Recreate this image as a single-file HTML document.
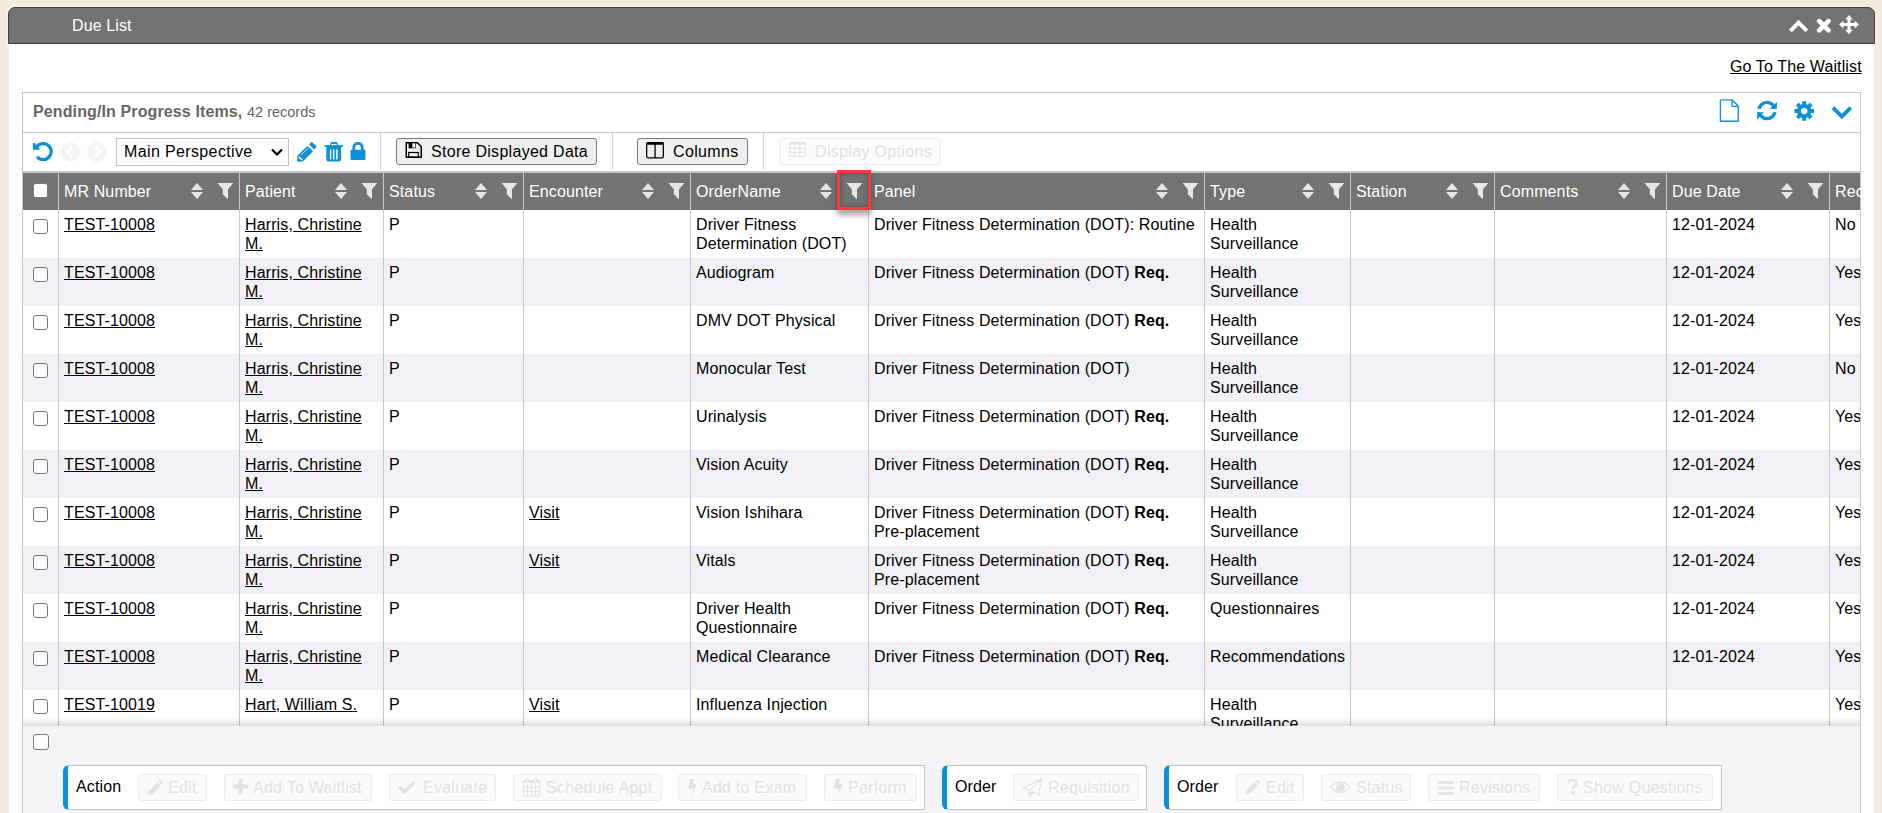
<!DOCTYPE html>
<html><head><meta charset="utf-8"><style>
*{box-sizing:border-box}
html,body{margin:0;padding:0}
body{width:1882px;height:813px;overflow:hidden;background:#f4ecdf;position:relative;font-family:"Liberation Sans",sans-serif;font-size:16px;line-height:19px;color:#000;letter-spacing:0.12px}
.a{position:absolute}
.t{position:absolute;white-space:nowrap}
u{text-decoration:underline}
.hd{position:absolute;top:173px;height:37px;background:#737373}
.vs{position:absolute;width:1px;background:#c8c8c8}
.btn{position:absolute;top:138px;height:27px;border:1px solid #7a7a7a;border-radius:3px;background:#efefef}
.fb{position:absolute;top:774px;height:27px;border:1px solid #ececec;border-radius:3px;background:#fafafa;color:#d9d9d9}
.grp{position:absolute;top:765px;height:45px;border:1px solid #c4c4c4;background:#fff;border-left:5px solid #0a91d8;border-radius:6px 0 0 6px}
</style></head><body>

<div class="a" style="left:8px;top:7px;width:1867px;height:37px;background:#737373;border:1px solid #3f3f3f;border-radius:7px 7px 0 0;box-shadow:0 0 0 1px #fcf6ea"></div>
<div class="t" style="left:72px;top:16px;color:#fff">Due List</div>
<svg class="a" style="left:1788px;top:19px" width="22" height="15" viewBox="0 0 22 15"><path d="M2.4 11.9 L10.6 3.6 L18.8 11.9" stroke="#fff" stroke-width="4" fill="none" stroke-linecap="butt"/></svg>
<svg class="a" style="left:1816px;top:18px" width="16" height="16" viewBox="0 0 16 16"><path d="M3.2 3.1 L12.5 12.3 M12.5 3.1 L3.2 12.3" stroke="#fff" stroke-width="4.6" stroke-linecap="round"/></svg>
<svg class="a" style="left:1839px;top:15px" width="20" height="20" viewBox="0 0 20 20"><path d="M10 0 L13.85 4.4 H11.5 V8.1 H15.6 V5.75 L20 9.6 L15.6 13.45 V11.1 H11.5 V14.8 H13.85 L10 19.2 L6.15 14.8 H8.5 V11.1 H4.4 V13.45 L0 9.6 L4.4 5.75 V8.1 H8.5 V4.4 H6.15 Z" fill="#fff"/></svg>
<div class="a" style="left:8px;top:44px;width:1867px;height:769px;background:#fff;border-left:1px solid #eeeef6;border-right:1px solid #e8e8f2"></div>
<div class="t" style="left:1730px;top:57px"><u>Go To The Waitlist</u></div>
<div class="a" style="left:22px;top:92px;width:1839px;height:730px;border:1px solid #c6c6c6;background:#fff"></div>
<div class="t" style="left:33px;top:102px;color:#666"><b>Pending/In Progress Items,</b> <span style="font-size:14.5px;letter-spacing:0">42 records</span></div>
<div class="a" style="left:23px;top:132px;width:1837px;height:1px;background:#c6c6c6"></div>
<svg class="a" style="left:1719px;top:99px" width="21" height="23" viewBox="0 0 21 23"><path d="M2.4 0.8 H13 L19.25 7 V22.2 H1.4 V1.8 Q1.4 0.8 2.4 0.8 Z M13 0.8 V7.3 H19.25" stroke="#0a91d8" stroke-width="1.35" fill="none" stroke-linejoin="round"/></svg>
<svg class="a" style="left:1757px;top:100px" width="21" height="22" viewBox="0 0 21 22"><circle cx="10" cy="10.5" r="8.1" stroke="#0a91d8" stroke-width="3.4" fill="none"/><rect x="0" y="8.83" width="21" height="3.34" fill="#fff"/><path d="M19.85 1.95 V8.83 H12.78 Z M0.14 19.8 V12.17 H6.83 Z" fill="#0a91d8"/></svg>
<svg class="a" style="left:1794px;top:101px" width="21" height="21" viewBox="0 0 21 21"><path d="M17.30 8.11 L20.03 7.92 L20.03 12.08 L17.30 11.89 L16.57 13.65 L18.64 15.44 L15.69 18.39 L13.90 16.32 L12.14 17.05 L12.33 19.78 L8.17 19.78 L8.36 17.05 L6.60 16.32 L4.81 18.39 L1.86 15.44 L3.93 13.65 L3.20 11.89 L0.47 12.08 L0.47 7.92 L3.20 8.11 L3.93 6.35 L1.86 4.56 L4.81 1.61 L6.60 3.68 L8.36 2.95 L8.17 0.22 L12.33 0.22 L12.14 2.95 L13.90 3.68 L15.69 1.61 L18.64 4.56 L16.57 6.35Z M10.25 6.7 A3.3 3.3 0 1 0 10.26 6.7 Z" fill="#0a91d8" fill-rule="evenodd"/></svg>
<svg class="a" style="left:1831px;top:105px" width="22" height="16" viewBox="0 0 22 16"><path d="M1.95 2.6 L10.875 11.55 L19.8 2.6" stroke="#0a91d8" stroke-width="3.8" fill="none" stroke-linecap="butt"/></svg>
<svg class="a" style="left:32px;top:142px" width="21" height="21" viewBox="0 0 21 21"><path d="M4.65 5.0 A8 8 0 1 1 5.07 14.74" stroke="#0a91d8" stroke-width="3.3" fill="none"/><path d="M0.9 0.9 L2.5 0.9 L8.3 7.8 L0.9 7.8 Z" fill="#0a91d8"/></svg>
<svg class="a" style="left:60px;top:142px" width="21" height="20" viewBox="0 0 21 20"><circle cx="10.25" cy="10" r="10" fill="#f5f5f5"/><path d="M12.2 4.4 L7.6 9.8 L12.2 15.2" stroke="#fff" stroke-width="2.8" fill="none"/></svg>
<svg class="a" style="left:87px;top:142px" width="21" height="20" viewBox="0 0 21 20"><circle cx="10.25" cy="10" r="10" fill="#f5f5f5"/><path d="M8.3 4.4 L12.9 9.8 L8.3 15.2" stroke="#fff" stroke-width="2.8" fill="none"/></svg>
<div class="a" style="left:116px;top:138px;width:173px;height:28px;border:1px solid #c4c4c4;background:#fff"></div>
<div class="t" style="left:124px;top:142px;letter-spacing:0.37px">Main Perspective</div>
<svg class="a" style="left:271px;top:148px" width="12" height="9" viewBox="0 0 12 9"><path d="M1 1.5 L6 6.5 L11 1.5" stroke="#000" stroke-width="2.2" fill="none"/></svg>
<svg class="a" style="left:297px;top:142px" width="21" height="21" viewBox="0 0 21 21"><path d="M12 2.3 L14.6 0.1 Q14.9 -0.1 15.2 0.2 L19.4 4.3 Q19.7 4.6 19.4 4.9 L17.2 7.6 Z" fill="#0a91d8"/><path d="M10.3 4.1 L16.1 9.3 L5.7 19.5 L0.2 19.8 L0.2 14.1 Z" fill="#0a91d8"/><path d="M4.1 12.6 L11.4 6.1" stroke="#e8f4fb" stroke-width="0.8"/><path d="M2.3 15.3 L4.6 17.4" stroke="#fff" stroke-width="1.7" stroke-linecap="round"/></svg>
<svg class="a" style="left:324px;top:142px" width="20" height="20" viewBox="0 0 20 20"><path d="M5.9 3.4 L6.6 1 Q6.9 0 8 0 H12 Q13.1 0 13.4 1 L14.1 3.4 H12.8 L12.4 2 H7.6 L7.2 3.4 Z" fill="#0a91d8"/><rect x="0.7" y="3.1" width="18.2" height="1.9" fill="#0a91d8"/><path d="M2.3 4.9 H17.05 V17.6 Q17.05 19.6 15.05 19.6 H4.3 Q2.3 19.6 2.3 17.6 Z" fill="#0a91d8"/><rect x="5.9" y="7.5" width="1.4" height="9.9" fill="#fff"/><rect x="9" y="7.5" width="1.4" height="9.9" fill="#fff"/><rect x="12.1" y="7.5" width="1.5" height="9.9" fill="#fff"/></svg>
<svg class="a" style="left:350px;top:142px" width="16" height="19" viewBox="0 0 16 19"><path d="M3.8 8 V5.5 A4.2 4.2 0 0 1 12.2 5.5 V8" stroke="#0a91d8" stroke-width="2.8" fill="none"/><rect x="0.5" y="7.8" width="15" height="10.2" rx="1.2" fill="#0a91d8"/></svg>
<div class="a" style="left:380px;top:133px;width:1px;height:37px;background:#d6d6d6"></div>
<div class="btn" style="left:396px;width:201px"></div>
<svg class="a" style="left:405px;top:142px" width="18" height="17" viewBox="0 0 18 17"><path d="M1.25 0.75 H12.5 L16.25 4.5 V15.15 H1.25 Z" stroke="#000" stroke-width="1.5" fill="none" stroke-linejoin="round"/><path d="M3.6 0.75 H10.9 V6.3 H3.6 Z" fill="#000"/><rect x="7.4" y="1.3" width="2.9" height="4.3" fill="#fff"/><rect x="3.7" y="10.5" width="9.6" height="4.7" stroke="#000" stroke-width="1.2" fill="none"/></svg>
<div class="t" style="left:431px;top:142px;letter-spacing:0.29px">Store Displayed Data</div>
<div class="a" style="left:612px;top:133px;width:1px;height:37px;background:#d6d6d6"></div>
<div class="btn" style="left:637px;width:111px"></div>
<svg class="a" style="left:646px;top:142px" width="18" height="17" viewBox="0 0 18 17"><rect x="0.65" y="0.65" width="16.7" height="15.2" rx="1.6" stroke="#000" stroke-width="1.3" fill="none"/><path d="M0 2.2 Q0 0 2.2 0 H15.8 Q18 0 18 2.2 V2.8 H0 Z" fill="#000"/><rect x="8.4" y="1" width="1.3" height="15" fill="#000"/></svg>
<div class="t" style="left:673px;top:142px;letter-spacing:0.35px">Columns</div>
<div class="a" style="left:763px;top:133px;width:1px;height:37px;background:#d6d6d6"></div>
<div class="btn" style="left:779px;width:162px;border-color:#efefef;background:#fcfcfc"></div>
<svg class="a" style="left:789px;top:142px" width="17" height="15" viewBox="0 0 17 15"><rect x="0" y="0" width="17" height="15" rx="1.6" fill="#e5e5e5"/><rect x="1.1" y="2.7" width="4.0" height="2.8" fill="#fbfbfb"/><rect x="1.1" y="6.8" width="4.0" height="3.0" fill="#fbfbfb"/><rect x="1.1" y="10.9" width="4.0" height="3.0" fill="#fbfbfb"/><rect x="6.0" y="2.7" width="4.0" height="2.8" fill="#fbfbfb"/><rect x="6.0" y="6.8" width="4.0" height="3.0" fill="#fbfbfb"/><rect x="6.0" y="10.9" width="4.0" height="3.0" fill="#fbfbfb"/><rect x="11.5" y="2.7" width="4.2" height="2.8" fill="#fbfbfb"/><rect x="11.5" y="6.8" width="4.2" height="3.0" fill="#fbfbfb"/><rect x="11.5" y="10.9" width="4.2" height="3.0" fill="#fbfbfb"/></svg>
<div class="t" style="left:815px;top:142px;color:#e0e0e0;letter-spacing:0.33px">Display Options</div>
<div class="a" style="left:23px;top:171px;width:1837px;height:2px;background:#c8c8c8"></div>
<div class="hd" style="left:23px;width:1837px"></div>
<div style="position:absolute;left:33px;top:183px;width:15px;height:15px;border:1px solid #7a7a7a;border-radius:3px;background:#fff"></div>
<div class="t" style="left:64px;top:182px;color:#fff">MR Number</div>
<div class="a" style="left:217px;top:183px"><svg width="16" height="16" viewBox="0 0 16 16"><path d="M0.5 0 H16.5 L11 6.3 V15.8 L10.3 15.8 L5.8 11.3 V6.3 Z" fill="#e6e6e6"/></svg></div>
<div class="a" style="left:191px;top:183px"><svg width="12" height="17" viewBox="0 0 12 17"><path d="M6 0 L12 7 H0 Z M0 9 H12 L6 16 Z" fill="#e6e6e6"/></svg></div>
<div class="t" style="left:245px;top:182px;color:#fff">Patient</div>
<div class="a" style="left:361px;top:183px"><svg width="16" height="16" viewBox="0 0 16 16"><path d="M0.5 0 H16.5 L11 6.3 V15.8 L10.3 15.8 L5.8 11.3 V6.3 Z" fill="#e6e6e6"/></svg></div>
<div class="a" style="left:335px;top:183px"><svg width="12" height="17" viewBox="0 0 12 17"><path d="M6 0 L12 7 H0 Z M0 9 H12 L6 16 Z" fill="#e6e6e6"/></svg></div>
<div class="t" style="left:389px;top:182px;color:#fff">Status</div>
<div class="a" style="left:501px;top:183px"><svg width="16" height="16" viewBox="0 0 16 16"><path d="M0.5 0 H16.5 L11 6.3 V15.8 L10.3 15.8 L5.8 11.3 V6.3 Z" fill="#e6e6e6"/></svg></div>
<div class="a" style="left:475px;top:183px"><svg width="12" height="17" viewBox="0 0 12 17"><path d="M6 0 L12 7 H0 Z M0 9 H12 L6 16 Z" fill="#e6e6e6"/></svg></div>
<div class="t" style="left:529px;top:182px;color:#fff">Encounter</div>
<div class="a" style="left:668px;top:183px"><svg width="16" height="16" viewBox="0 0 16 16"><path d="M0.5 0 H16.5 L11 6.3 V15.8 L10.3 15.8 L5.8 11.3 V6.3 Z" fill="#e6e6e6"/></svg></div>
<div class="a" style="left:642px;top:183px"><svg width="12" height="17" viewBox="0 0 12 17"><path d="M6 0 L12 7 H0 Z M0 9 H12 L6 16 Z" fill="#e6e6e6"/></svg></div>
<div class="t" style="left:696px;top:182px;color:#fff">OrderName</div>
<div class="a" style="left:846px;top:183px"><svg width="16" height="16" viewBox="0 0 16 16"><path d="M0.5 0 H16.5 L11 6.3 V15.8 L10.3 15.8 L5.8 11.3 V6.3 Z" fill="#e6e6e6"/></svg></div>
<div class="a" style="left:820px;top:183px"><svg width="12" height="17" viewBox="0 0 12 17"><path d="M6 0 L12 7 H0 Z M0 9 H12 L6 16 Z" fill="#e6e6e6"/></svg></div>
<div class="t" style="left:874px;top:182px;color:#fff">Panel</div>
<div class="a" style="left:1182px;top:183px"><svg width="16" height="16" viewBox="0 0 16 16"><path d="M0.5 0 H16.5 L11 6.3 V15.8 L10.3 15.8 L5.8 11.3 V6.3 Z" fill="#e6e6e6"/></svg></div>
<div class="a" style="left:1156px;top:183px"><svg width="12" height="17" viewBox="0 0 12 17"><path d="M6 0 L12 7 H0 Z M0 9 H12 L6 16 Z" fill="#e6e6e6"/></svg></div>
<div class="t" style="left:1210px;top:182px;color:#fff">Type</div>
<div class="a" style="left:1328px;top:183px"><svg width="16" height="16" viewBox="0 0 16 16"><path d="M0.5 0 H16.5 L11 6.3 V15.8 L10.3 15.8 L5.8 11.3 V6.3 Z" fill="#e6e6e6"/></svg></div>
<div class="a" style="left:1302px;top:183px"><svg width="12" height="17" viewBox="0 0 12 17"><path d="M6 0 L12 7 H0 Z M0 9 H12 L6 16 Z" fill="#e6e6e6"/></svg></div>
<div class="t" style="left:1356px;top:182px;color:#fff">Station</div>
<div class="a" style="left:1472px;top:183px"><svg width="16" height="16" viewBox="0 0 16 16"><path d="M0.5 0 H16.5 L11 6.3 V15.8 L10.3 15.8 L5.8 11.3 V6.3 Z" fill="#e6e6e6"/></svg></div>
<div class="a" style="left:1446px;top:183px"><svg width="12" height="17" viewBox="0 0 12 17"><path d="M6 0 L12 7 H0 Z M0 9 H12 L6 16 Z" fill="#e6e6e6"/></svg></div>
<div class="t" style="left:1500px;top:182px;color:#fff">Comments</div>
<div class="a" style="left:1644px;top:183px"><svg width="16" height="16" viewBox="0 0 16 16"><path d="M0.5 0 H16.5 L11 6.3 V15.8 L10.3 15.8 L5.8 11.3 V6.3 Z" fill="#e6e6e6"/></svg></div>
<div class="a" style="left:1618px;top:183px"><svg width="12" height="17" viewBox="0 0 12 17"><path d="M6 0 L12 7 H0 Z M0 9 H12 L6 16 Z" fill="#e6e6e6"/></svg></div>
<div class="t" style="left:1672px;top:182px;color:#fff">Due Date</div>
<div class="a" style="left:1807px;top:183px"><svg width="16" height="16" viewBox="0 0 16 16"><path d="M0.5 0 H16.5 L11 6.3 V15.8 L10.3 15.8 L5.8 11.3 V6.3 Z" fill="#e6e6e6"/></svg></div>
<div class="a" style="left:1781px;top:183px"><svg width="12" height="17" viewBox="0 0 12 17"><path d="M6 0 L12 7 H0 Z M0 9 H12 L6 16 Z" fill="#e6e6e6"/></svg></div>
<div class="t" style="left:1835px;top:182px;color:#fff">Rec</div>
<div class="a" style="left:23px;top:210px;width:1837px;height:516px;overflow:hidden">
<div class="a" style="left:0;top:0px;width:1837px;height:48px;background:#fff"></div>
<div style="position:absolute;left:10px;top:9px;width:15px;height:15px;border:1px solid #767676;border-radius:3px;background:#fff"></div>
<div class="t" style="left:41px;top:5px"><u>TEST-10008</u></div>
<div class="t" style="left:222px;top:5px"><u>Harris, Christine</u><br><u>M.</u></div>
<div class="t" style="left:366px;top:5px">P</div>
<div class="t" style="left:673px;top:5px">Driver Fitness<br>Determination (DOT)</div>
<div class="t" style="left:851px;top:5px">Driver Fitness Determination (DOT): Routine</div>
<div class="t" style="left:1187px;top:5px">Health<br>Surveillance</div>
<div class="t" style="left:1649px;top:5px">12-01-2024</div>
<div class="t" style="left:1812px;top:5px">No</div>
<div class="a" style="left:0;top:48px;width:1837px;height:48px;background:#f0f0f5"></div>
<div style="position:absolute;left:10px;top:57px;width:15px;height:15px;border:1px solid #767676;border-radius:3px;background:#fff"></div>
<div class="t" style="left:41px;top:53px"><u>TEST-10008</u></div>
<div class="t" style="left:222px;top:53px"><u>Harris, Christine</u><br><u>M.</u></div>
<div class="t" style="left:366px;top:53px">P</div>
<div class="t" style="left:673px;top:53px">Audiogram</div>
<div class="t" style="left:851px;top:53px">Driver Fitness Determination (DOT) <b>Req.</b></div>
<div class="t" style="left:1187px;top:53px">Health<br>Surveillance</div>
<div class="t" style="left:1649px;top:53px">12-01-2024</div>
<div class="t" style="left:1812px;top:53px">Yes</div>
<div class="a" style="left:0;top:96px;width:1837px;height:48px;background:#fff"></div>
<div style="position:absolute;left:10px;top:105px;width:15px;height:15px;border:1px solid #767676;border-radius:3px;background:#fff"></div>
<div class="t" style="left:41px;top:101px"><u>TEST-10008</u></div>
<div class="t" style="left:222px;top:101px"><u>Harris, Christine</u><br><u>M.</u></div>
<div class="t" style="left:366px;top:101px">P</div>
<div class="t" style="left:673px;top:101px">DMV DOT Physical</div>
<div class="t" style="left:851px;top:101px">Driver Fitness Determination (DOT) <b>Req.</b></div>
<div class="t" style="left:1187px;top:101px">Health<br>Surveillance</div>
<div class="t" style="left:1649px;top:101px">12-01-2024</div>
<div class="t" style="left:1812px;top:101px">Yes</div>
<div class="a" style="left:0;top:144px;width:1837px;height:48px;background:#f0f0f5"></div>
<div style="position:absolute;left:10px;top:153px;width:15px;height:15px;border:1px solid #767676;border-radius:3px;background:#fff"></div>
<div class="t" style="left:41px;top:149px"><u>TEST-10008</u></div>
<div class="t" style="left:222px;top:149px"><u>Harris, Christine</u><br><u>M.</u></div>
<div class="t" style="left:366px;top:149px">P</div>
<div class="t" style="left:673px;top:149px">Monocular Test</div>
<div class="t" style="left:851px;top:149px">Driver Fitness Determination (DOT)</div>
<div class="t" style="left:1187px;top:149px">Health<br>Surveillance</div>
<div class="t" style="left:1649px;top:149px">12-01-2024</div>
<div class="t" style="left:1812px;top:149px">No</div>
<div class="a" style="left:0;top:192px;width:1837px;height:48px;background:#fff"></div>
<div style="position:absolute;left:10px;top:201px;width:15px;height:15px;border:1px solid #767676;border-radius:3px;background:#fff"></div>
<div class="t" style="left:41px;top:197px"><u>TEST-10008</u></div>
<div class="t" style="left:222px;top:197px"><u>Harris, Christine</u><br><u>M.</u></div>
<div class="t" style="left:366px;top:197px">P</div>
<div class="t" style="left:673px;top:197px">Urinalysis</div>
<div class="t" style="left:851px;top:197px">Driver Fitness Determination (DOT) <b>Req.</b></div>
<div class="t" style="left:1187px;top:197px">Health<br>Surveillance</div>
<div class="t" style="left:1649px;top:197px">12-01-2024</div>
<div class="t" style="left:1812px;top:197px">Yes</div>
<div class="a" style="left:0;top:240px;width:1837px;height:48px;background:#f0f0f5"></div>
<div style="position:absolute;left:10px;top:249px;width:15px;height:15px;border:1px solid #767676;border-radius:3px;background:#fff"></div>
<div class="t" style="left:41px;top:245px"><u>TEST-10008</u></div>
<div class="t" style="left:222px;top:245px"><u>Harris, Christine</u><br><u>M.</u></div>
<div class="t" style="left:366px;top:245px">P</div>
<div class="t" style="left:673px;top:245px">Vision Acuity</div>
<div class="t" style="left:851px;top:245px">Driver Fitness Determination (DOT) <b>Req.</b></div>
<div class="t" style="left:1187px;top:245px">Health<br>Surveillance</div>
<div class="t" style="left:1649px;top:245px">12-01-2024</div>
<div class="t" style="left:1812px;top:245px">Yes</div>
<div class="a" style="left:0;top:288px;width:1837px;height:48px;background:#fff"></div>
<div style="position:absolute;left:10px;top:297px;width:15px;height:15px;border:1px solid #767676;border-radius:3px;background:#fff"></div>
<div class="t" style="left:41px;top:293px"><u>TEST-10008</u></div>
<div class="t" style="left:222px;top:293px"><u>Harris, Christine</u><br><u>M.</u></div>
<div class="t" style="left:366px;top:293px">P</div>
<div class="t" style="left:506px;top:293px"><u>Visit</u></div>
<div class="t" style="left:673px;top:293px">Vision Ishihara</div>
<div class="t" style="left:851px;top:293px">Driver Fitness Determination (DOT) <b>Req.</b><br>Pre-placement</div>
<div class="t" style="left:1187px;top:293px">Health<br>Surveillance</div>
<div class="t" style="left:1649px;top:293px">12-01-2024</div>
<div class="t" style="left:1812px;top:293px">Yes</div>
<div class="a" style="left:0;top:336px;width:1837px;height:48px;background:#f0f0f5"></div>
<div style="position:absolute;left:10px;top:345px;width:15px;height:15px;border:1px solid #767676;border-radius:3px;background:#fff"></div>
<div class="t" style="left:41px;top:341px"><u>TEST-10008</u></div>
<div class="t" style="left:222px;top:341px"><u>Harris, Christine</u><br><u>M.</u></div>
<div class="t" style="left:366px;top:341px">P</div>
<div class="t" style="left:506px;top:341px"><u>Visit</u></div>
<div class="t" style="left:673px;top:341px">Vitals</div>
<div class="t" style="left:851px;top:341px">Driver Fitness Determination (DOT) <b>Req.</b><br>Pre-placement</div>
<div class="t" style="left:1187px;top:341px">Health<br>Surveillance</div>
<div class="t" style="left:1649px;top:341px">12-01-2024</div>
<div class="t" style="left:1812px;top:341px">Yes</div>
<div class="a" style="left:0;top:384px;width:1837px;height:48px;background:#fff"></div>
<div style="position:absolute;left:10px;top:393px;width:15px;height:15px;border:1px solid #767676;border-radius:3px;background:#fff"></div>
<div class="t" style="left:41px;top:389px"><u>TEST-10008</u></div>
<div class="t" style="left:222px;top:389px"><u>Harris, Christine</u><br><u>M.</u></div>
<div class="t" style="left:366px;top:389px">P</div>
<div class="t" style="left:673px;top:389px">Driver Health<br>Questionnaire</div>
<div class="t" style="left:851px;top:389px">Driver Fitness Determination (DOT) <b>Req.</b></div>
<div class="t" style="left:1187px;top:389px">Questionnaires</div>
<div class="t" style="left:1649px;top:389px">12-01-2024</div>
<div class="t" style="left:1812px;top:389px">Yes</div>
<div class="a" style="left:0;top:432px;width:1837px;height:48px;background:#f0f0f5"></div>
<div style="position:absolute;left:10px;top:441px;width:15px;height:15px;border:1px solid #767676;border-radius:3px;background:#fff"></div>
<div class="t" style="left:41px;top:437px"><u>TEST-10008</u></div>
<div class="t" style="left:222px;top:437px"><u>Harris, Christine</u><br><u>M.</u></div>
<div class="t" style="left:366px;top:437px">P</div>
<div class="t" style="left:673px;top:437px">Medical Clearance</div>
<div class="t" style="left:851px;top:437px">Driver Fitness Determination (DOT) <b>Req.</b></div>
<div class="t" style="left:1187px;top:437px">Recommendations</div>
<div class="t" style="left:1649px;top:437px">12-01-2024</div>
<div class="t" style="left:1812px;top:437px">Yes</div>
<div class="a" style="left:0;top:480px;width:1837px;height:48px;background:#fff"></div>
<div style="position:absolute;left:10px;top:489px;width:15px;height:15px;border:1px solid #767676;border-radius:3px;background:#fff"></div>
<div class="t" style="left:41px;top:485px"><u>TEST-10019</u></div>
<div class="t" style="left:222px;top:485px"><u>Hart, William S.</u></div>
<div class="t" style="left:366px;top:485px">P</div>
<div class="t" style="left:506px;top:485px"><u>Visit</u></div>
<div class="t" style="left:673px;top:485px">Influenza Injection</div>
<div class="t" style="left:1187px;top:485px">Health<br>Surveillance</div>
<div class="t" style="left:1812px;top:485px">Yes</div>
</div>
<div class="vs" style="left:58px;top:173px;height:553px"></div>
<div class="vs" style="left:239px;top:173px;height:553px"></div>
<div class="vs" style="left:383px;top:173px;height:553px"></div>
<div class="vs" style="left:523px;top:173px;height:553px"></div>
<div class="vs" style="left:690px;top:173px;height:553px"></div>
<div class="vs" style="left:868px;top:173px;height:553px"></div>
<div class="vs" style="left:1204px;top:173px;height:553px"></div>
<div class="vs" style="left:1350px;top:173px;height:553px"></div>
<div class="vs" style="left:1494px;top:173px;height:553px"></div>
<div class="vs" style="left:1666px;top:173px;height:553px"></div>
<div class="vs" style="left:1829px;top:173px;height:553px"></div>
<div class="a" style="left:23px;top:718px;width:1837px;height:8px;background:linear-gradient(to bottom,rgba(0,0,0,0),rgba(0,0,0,0.13))"></div>
<div class="a" style="left:23px;top:726px;width:1837px;height:87px;background:#f4f4f6"></div>
<div style="position:absolute;left:33px;top:734px;width:16px;height:16px;border:1px solid #767676;border-radius:3px;background:#fff"></div>
<div class="grp" style="left:63px;width:862px"></div><div class="t" style="left:76px;top:777px">Action</div><div class="fb" style="left:138px;width:69px"></div><svg class="a" style="left:148px;top:779px" width="16" height="16" viewBox="0 0 16 16"><path d="M12 0.5 L15.5 4 L13.8 5.7 L10.3 2.2 Z M9.5 3 L13 6.5 L4.8 14.7 L1 15.5 L0.5 15 L1.3 11.2 Z" fill="#e3e3e3"/></svg><div class="t" style="left:168px;top:778px;color:#e2e2e2;letter-spacing:0.25px">Edit</div><div class="fb" style="left:224px;width:148px"></div><svg class="a" style="left:233px;top:779px" width="15" height="15" viewBox="0 0 15 15"><path d="M5.5 0 H9.5 V5.5 H15 V9.5 H9.5 V15 H5.5 V9.5 H0 V5.5 H5.5 Z" fill="#e3e3e3"/></svg><div class="t" style="left:253px;top:778px;color:#e2e2e2;letter-spacing:0.25px">Add To Waitlist</div><div class="fb" style="left:389px;width:107px"></div><svg class="a" style="left:398px;top:780px" width="18" height="14" viewBox="0 0 18 14"><path d="M1.5 7 L6.5 12 L16.5 2" stroke="#e3e3e3" stroke-width="3.6" fill="none"/></svg><div class="t" style="left:423px;top:778px;color:#e2e2e2;letter-spacing:0.25px">Evaluate</div><div class="fb" style="left:513px;width:149px"></div><svg class="a" style="left:522px;top:778px" width="19" height="19" viewBox="0 0 19 19"><rect x="1.25" y="2.8" width="16.3" height="15.4" rx="1.3" stroke="#e3e3e3" stroke-width="1.1" fill="none"/><rect x="0.7" y="2.3" width="17.4" height="2.4" fill="#e3e3e3"/><path d="M5.5 4.7 V18 M9.5 4.7 V18 M13.5 4.7 V18 M1 9.1 H17.8 M1 13.3 H17.8" stroke="#e3e3e3" stroke-width="1"/><rect x="3.6" y="0" width="3.2" height="4.7" rx="1.2" fill="#e3e3e3"/><rect x="11.9" y="0" width="3.2" height="4.7" rx="1.2" fill="#e3e3e3"/><rect x="4.6" y="1" width="1.2" height="2.8" fill="#fbfbfb"/><rect x="12.9" y="1" width="1.2" height="2.8" fill="#fbfbfb"/></svg><div class="t" style="left:546px;top:778px;color:#e2e2e2;letter-spacing:0.25px">Schedule Appt</div><div class="fb" style="left:678px;width:129px"></div><svg class="a" style="left:688px;top:778px" width="10" height="19" viewBox="0 0 10 19"><path d="M1.91 0.96 H6.07 L4.79 5.91 H8.95 L3.19 18.39 L5.43 10.39 H0.05 Z" fill="#e3e3e3"/></svg><div class="t" style="left:702px;top:778px;color:#e2e2e2;letter-spacing:0.25px">Add to Exam</div><div class="fb" style="left:824px;width:93px"></div><svg class="a" style="left:834px;top:778px" width="10" height="19" viewBox="0 0 10 19"><path d="M1.91 0.96 H6.07 L4.79 5.91 H8.95 L3.19 18.39 L5.43 10.39 H0.05 Z" fill="#e3e3e3"/></svg><div class="t" style="left:848px;top:778px;color:#e2e2e2;letter-spacing:0.25px">Perform</div>
<div class="grp" style="left:942px;width:205px"></div><div class="t" style="left:955px;top:777px">Order</div><div class="fb" style="left:1013px;width:126px"></div><svg class="a" style="left:1022px;top:777px" width="21" height="21" viewBox="0 0 21 21"><path d="M1.12 11.39 L19.66 1.16 L16.79 17.79 L11.03 15.23 L7.19 19.39 L7.19 13.63 Z M7.19 13.63 L18.5 3" stroke="#e3e3e3" stroke-width="1.2" fill="none" stroke-linejoin="round"/><path d="M7.19 13.63 L11.03 15.23 L7.19 19.39 Z" fill="#e3e3e3"/></svg><div class="t" style="left:1048px;top:778px;color:#e2e2e2;letter-spacing:0.25px">Requisition</div>
<div class="grp" style="left:1164px;width:558px"></div><div class="t" style="left:1177px;top:777px">Order</div><div class="fb" style="left:1236px;width:68px"></div><svg class="a" style="left:1245px;top:779px" width="16" height="16" viewBox="0 0 16 16"><path d="M12 0.5 L15.5 4 L13.8 5.7 L10.3 2.2 Z M9.5 3 L13 6.5 L4.8 14.7 L1 15.5 L0.5 15 L1.3 11.2 Z" fill="#e3e3e3"/></svg><div class="t" style="left:1266px;top:778px;color:#e2e2e2;letter-spacing:0.25px">Edit</div><div class="fb" style="left:1321px;width:90px"></div><svg class="a" style="left:1330px;top:781px" width="21" height="14" viewBox="0 0 21 14"><path d="M0.9 6.3 Q10.3 -4 19.8 6.3 Q10.3 16.6 0.9 6.3 Z" stroke="#e3e3e3" stroke-width="1.3" fill="none"/><circle cx="10.4" cy="6.3" r="4.4" fill="#e3e3e3"/><path d="M7.6 5.2 Q8 3.6 9.6 3" stroke="#fbfbfb" stroke-width="1.1" fill="none"/></svg><div class="t" style="left:1356px;top:778px;color:#e2e2e2;letter-spacing:0.25px">Status</div><div class="fb" style="left:1428px;width:112px"></div><svg class="a" style="left:1438px;top:781px" width="16" height="14" viewBox="0 0 16 14"><rect x="0" y="0" width="16" height="3" fill="#e3e3e3"/><rect x="0" y="5.5" width="16" height="3" fill="#e3e3e3"/><rect x="0" y="11" width="16" height="3" fill="#e3e3e3"/></svg><div class="t" style="left:1459px;top:778px;color:#e2e2e2;letter-spacing:0.25px">Revisions</div><div class="fb" style="left:1557px;width:156px"></div><svg class="a" style="left:1567px;top:779px" width="11" height="16" viewBox="0 0 11 16"><path d="M1.5 4.5 Q1.5 1 5.5 1 Q9.5 1 9.5 4.3 Q9.5 6.5 7 7.8 Q5.8 8.5 5.8 10" stroke="#e3e3e3" stroke-width="2.6" fill="none"/><rect x="4.2" y="12" width="3.2" height="3.2" fill="#e3e3e3"/></svg><div class="t" style="left:1583px;top:778px;color:#e2e2e2;letter-spacing:0.25px">Show Questions</div>
<div class="a" style="left:837px;top:170px;width:34px;height:40px;border:3px solid #f03c3c;background:#737373;box-shadow:0 5px 6px rgba(0,0,0,0.35), inset 0 0 5px rgba(0,0,0,0.35)"><div class="a" style="left:6px;top:10px"><svg width="16" height="16" viewBox="0 0 16 16"><path d="M0.5 0 H16.5 L11 6.3 V15.8 L10.3 15.8 L5.8 11.3 V6.3 Z" fill="#e6e6e6"/></svg></div></div>
</body></html>
